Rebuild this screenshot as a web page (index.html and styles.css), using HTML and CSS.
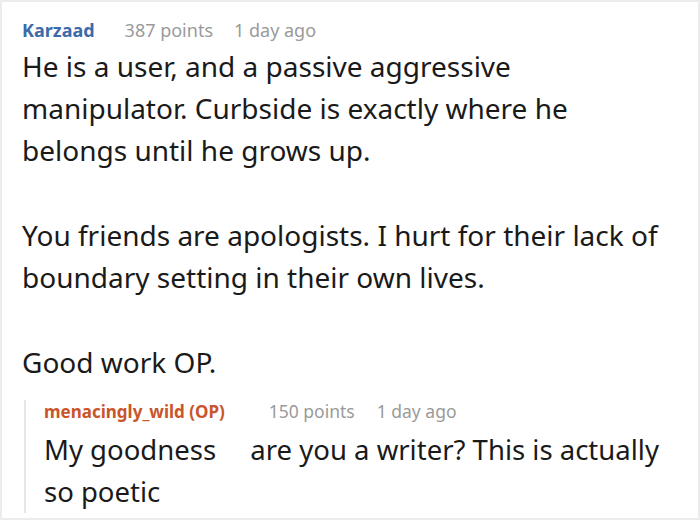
FILE: index.html
```html
<!DOCTYPE html>
<html>
<head>
<meta charset="utf-8">
<link rel="stylesheet" href="styles.css">
</head>
<body>
<div class="frame">
  <div class="comment">
    <div class="meta">
      <span class="author">Karzaad</span>
      <span class="points">387 points</span>
      <span class="time">1 day ago</span>
    </div>
    <div class="body">
      <p>He is a user, and a passive aggressive manipulator. Curbside is exactly where he belongs until he grows up.</p>
      <p>You friends are apologists. I hurt for their lack of boundary setting in their own lives.</p>
      <p>Good work OP.</p>
    </div>
  </div>
  <div class="reply">
    <div class="meta">
      <span class="author op">menacingly_wild (OP)</span>
      <span class="points">150 points</span>
      <span class="time">1 day ago</span>
    </div>
    <div class="body">
      <p>My goodness <span class="gap"></span> are you a writer? This is actually so poetic</p>
    </div>
  </div>
</div>
</body>
</html>
```
FILE: styles.css
```css
html, body {
  margin: 0;
  padding: 0;
  background: #fff;
}
.frame {
  width: 700px;
  height: 520px;
  box-sizing: border-box;
  border: 2px solid #ececec;
  overflow: hidden;
  font-family: "Noto Sans", "Open Sans", sans-serif;
  color: #1a1a1a;
}
.comment {
  padding: 17px 26px 0 20px;
}
.meta {
  display: flex;
  align-items: baseline;
  font-size: 18px;
  line-height: 22px;
  color: #9a9a9a;
}
.author {
  font-weight: 700;
  color: #3c6aaa;
  margin-right: 30px;
}
.points {
  margin-right: 21px;
}
.body {
  font-size: 28px;
  line-height: 42px;
  margin-top: 4px;
}
.body p {
  margin: 0 0 43px 0;
}
.body p:last-child {
  margin-bottom: 0;
}
.reply {
  margin: 17px 0 0 22px;
  border-left: 2px solid #e6e6e6;
  padding: 0 0 0 18px;
  width: 630px;
}
.reply .meta {
  font-size: 17.5px;
  font-stretch: 80%;
}
.reply .author {
  font-size: 17px;
  color: #c9552b;
  margin-right: 44px;
}
.reply .points {
  margin-right: 22px;
}
.reply .body {
  margin-top: 6px;
  font-size: 27.5px;
  font-stretch: 80%;
}
.gap {
  display: inline-block;
  width: 20px;
}
```
